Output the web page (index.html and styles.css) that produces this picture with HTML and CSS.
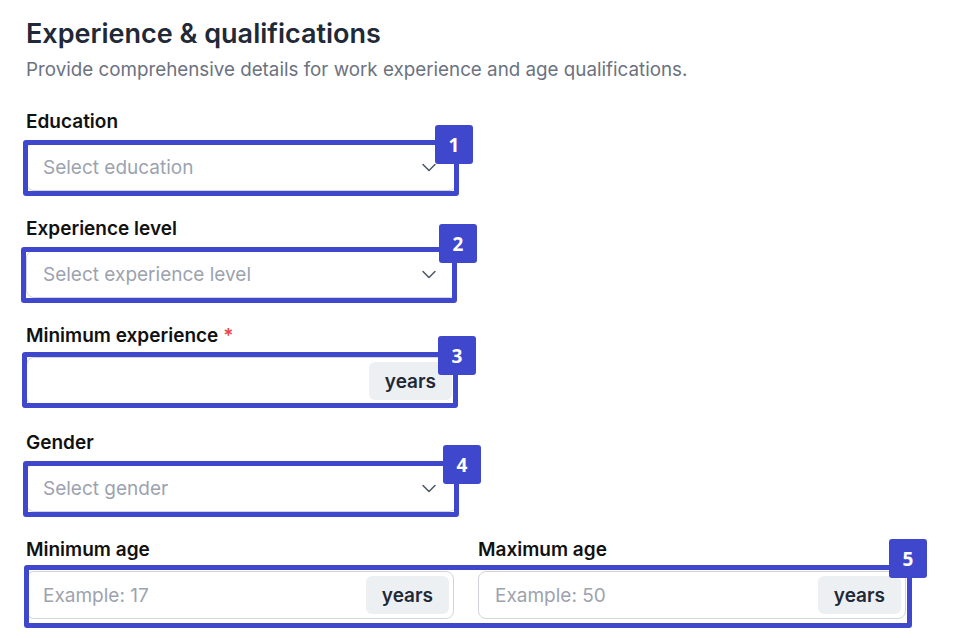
FILE: index.html
```html
<!DOCTYPE html>
<html lang="en">
<head>
    <meta charset="UTF-8">
    <meta name="viewport" content="width=device-width, initial-scale=1.0">
    <title>Experience &amp; qualifications</title>
    <link rel="stylesheet" href="styles.css">
</head>
<body>
    <div class="container">
        <h2>Experience &amp; qualifications</h2>
        <p class="subtitle">Provide comprehensive details for work experience and age qualifications.</p>

        <div class="form-group half">
            <label>Education</label>
            <div class="select">
                <span class="placeholder">Select education</span>
                <svg class="chevron" width="16" height="16" viewBox="0 0 16 16"><path d="M2 5.5l6 6 6-6" fill="none" stroke="#4b5563" stroke-width="1.5" stroke-linecap="round" stroke-linejoin="round"/></svg>
            </div>
        </div>

        <div class="form-group half">
            <label>Experience level</label>
            <div class="select">
                <span class="placeholder">Select experience level</span>
                <svg class="chevron" width="16" height="16" viewBox="0 0 16 16"><path d="M2 5.5l6 6 6-6" fill="none" stroke="#4b5563" stroke-width="1.5" stroke-linecap="round" stroke-linejoin="round"/></svg>
            </div>
        </div>

        <div class="form-group half">
            <label>Minimum experience <span class="required">*</span></label>
            <div class="input-group">
                <input type="text">
                <span class="addon">years</span>
            </div>
        </div>

        <div class="form-group half">
            <label>Gender</label>
            <div class="select">
                <span class="placeholder">Select gender</span>
                <svg class="chevron" width="16" height="16" viewBox="0 0 16 16"><path d="M2 5.5l6 6 6-6" fill="none" stroke="#4b5563" stroke-width="1.5" stroke-linecap="round" stroke-linejoin="round"/></svg>
            </div>
        </div>

        <div class="row">
            <div class="form-group">
                <label>Minimum age</label>
                <div class="input-group">
                    <input type="text" placeholder="Example: 17">
                    <span class="addon">years</span>
                </div>
            </div>
            <div class="form-group">
                <label>Maximum age</label>
                <div class="input-group">
                    <input type="text" placeholder="Example: 50">
                    <span class="addon">years</span>
                </div>
            </div>
        </div>
    </div>

    <!-- annotation overlay -->
    <div class="mark" style="left:23px;top:140px;width:436px;height:56px;"></div>
    <div class="badge" style="left:435px;top:125px;">1</div>
    <div class="mark" style="left:21px;top:247px;width:436px;height:56px;"></div>
    <div class="badge" style="left:439px;top:224px;">2</div>
    <div class="mark" style="left:22px;top:352px;width:436px;height:56px;"></div>
    <div class="badge" style="left:438px;top:336px;">3</div>
    <div class="mark" style="left:23px;top:461px;width:436px;height:56px;"></div>
    <div class="badge" style="left:443px;top:445px;">4</div>
    <div class="mark" style="left:24px;top:565px;width:888px;height:63px;"></div>
    <div class="badge" style="left:889px;top:539px;">5</div>
</body>
</html>
```

FILE: styles.css
```css
body {
    font-family: Inter, "Noto Sans", sans-serif;
    background-color: #fff;
    margin: 0;
    padding: 0;
    color: #111827;
}

.container {
    width: 880px;
    padding: 16px 26px;
}

h2 {
    font-size: 27px;
    font-weight: 600;
    color: #1f2937;
    margin: 0;
    line-height: 36px;
}

.subtitle {
    font-size: 18.8px;
    color: #6b7280;
    margin: 4px 0 24px;
    line-height: 28px;
}

.form-group {
    margin-bottom: 24px;
}

.form-group.half {
    width: 431px;
}

label {
    display: block;
    font-size: 19px;
    font-weight: 600;
    color: #111;
    line-height: 28px;
    margin-bottom: 7px;
}

.required {
    color: #ef4444;
}

.select {
    height: 48px;
    box-sizing: border-box;
    border: 1px solid #d1d5db;
    border-radius: 8px;
    padding: 0 19px 0 16px;
    display: flex;
    align-items: center;
    justify-content: space-between;
}

.placeholder {
    font-size: 19px;
    color: #9ca3af;
}

.input-group {
    height: 48px;
    box-sizing: border-box;
    border: 1px solid #d1d5db;
    border-radius: 8px;
    padding: 4px;
    display: flex;
    align-items: stretch;
}

.input-group input {
    flex: 1;
    min-width: 0;
    border: none;
    outline: none;
    font-family: inherit;
    font-size: 19px;
    padding: 0 12px;
    background: transparent;
}

.input-group input::placeholder {
    color: #9ca3af;
}

.addon {
    background: #edf0f3;
    border-radius: 6px;
    padding: 0 16px;
    display: flex;
    align-items: center;
    font-size: 19px;
    font-weight: 600;
    color: #1f2937;
}

.row {
    display: grid;
    grid-template-columns: 1fr 1fr;
    column-gap: 24px;
}

.row .form-group {
    margin-bottom: 0;
}

.mark {
    position: absolute;
    box-sizing: border-box;
    border: 5px solid #3f48cc;
    border-radius: 3px;
}

.badge {
    position: absolute;
    width: 38px;
    height: 39px;
    background: #3f48cc;
    border-radius: 3px;
    color: #fff;
    font-family: "Open Sans", sans-serif;
    font-weight: 700;
    font-size: 19px;
    display: flex;
    align-items: center;
    justify-content: center;
}
```
